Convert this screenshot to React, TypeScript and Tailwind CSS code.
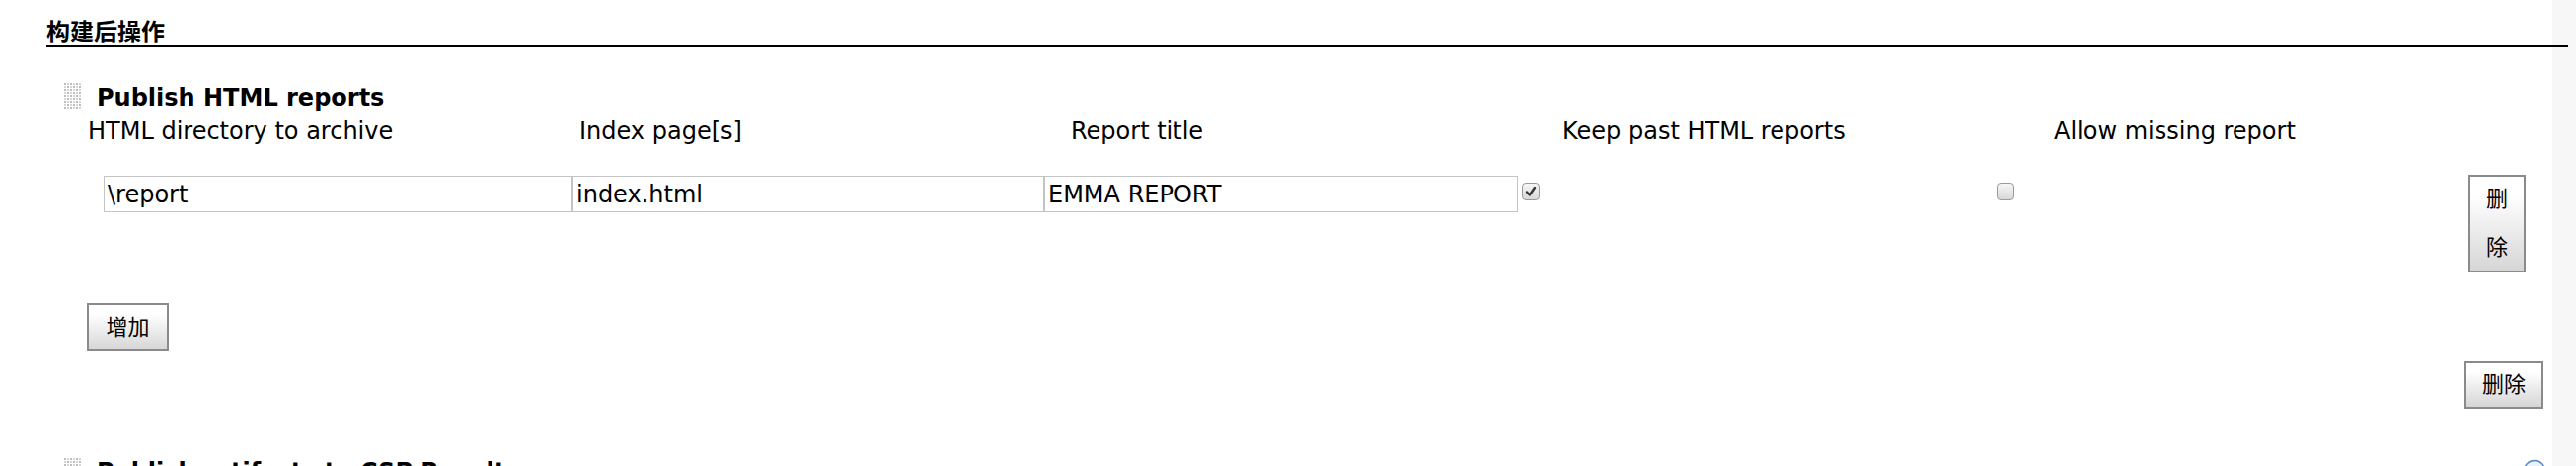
import React from "react";

const columns = [
  "HTML directory to archive",
  "Index page[s]",
  "Report title",
  "Keep past HTML reports",
  "Allow missing report",
];

const btn =
  "border-2 border-[#8a8a8a] bg-linear-to-b from-white from-20% to-[#d6d6d6] text-[22px] leading-none text-black";

function Grip() {
  const dots = [];
  for (let r = 0; r < 9; r++) {
    for (let c = 0; c < 6; c++) {
      dots.push(
        <rect key={`${r}-${c}`} x={c * 3} y={r * 3} width="2" height="2" fill={(r + c) % 2 ? "#d6d6d6" : "#bdbdbd"} />
      );
    }
  }
  return (
    <svg width="18" height="27" viewBox="0 0 18 27" className="shrink-0">
      {dots}
    </svg>
  );
}

function Checkbox({ checked }: { checked?: boolean }) {
  return (
    <div className="w-[18px] h-[18px] rounded-[4px] border border-[#9a9a9a] bg-linear-to-b from-[#f6f6f6] to-[#d8d8d8] flex items-center justify-center">
      {checked && (
        <svg width="12" height="12" viewBox="0 0 12 12">
          <path d="M2 6.5 L4.8 9.5 L10 2" fill="none" stroke="#333" strokeWidth="2.4" strokeLinecap="round" strokeLinejoin="round" />
        </svg>
      )}
    </div>
  );
}

function TextBox({ value, width }: { value: string; width: string }) {
  return (
    <div className={`${width} h-[37px] border border-[#c4c4c4] px-[3px] flex items-center text-[24px] leading-none`}>
      {value}
    </div>
  );
}

export default function App() {
  return (
    <div className="w-full h-[472px] overflow-hidden bg-[linear-gradient(to_right,white_2586px,#f7f7f7_2586px)] text-black font-['DejaVu_Sans','Noto_Sans_CJK_SC',sans-serif]">
      {/* section header */}
      <div className="ml-[47px] mr-[8px] pt-[16px] border-b-2 border-black">
        <div className="text-[24px] leading-[30px] font-bold font-['Noto_Sans_CJK_SC',sans-serif]">构建后操作</div>
      </div>

      {/* Publish HTML reports */}
      <div className="mt-[37px] ml-[65px] flex items-start gap-[15px]">
        <div className="-mt-[1px]">
          <Grip />
        </div>
        <div className="text-[24px] leading-[28px] font-bold">Publish HTML reports</div>
      </div>

      <div className="mt-[6px] ml-[89px] flex text-[24px] leading-[28px]">
        {columns.map((c) => (
          <div key={c} className="w-[498px] shrink-0 whitespace-nowrap">
            {c}
          </div>
        ))}
      </div>

      <div className="mt-[30px] ml-[105px] flex items-start">
        <div className="mt-[1px] flex">
          <TextBox value="\report" width="w-[475px]" />
          <TextBox value="index.html" width="w-[478px]" />
          <TextBox value="EMMA REPORT" width="w-[480px]" />
        </div>
        <div className="w-[485px] pl-[4px] pt-[8px] shrink-0">
          <Checkbox checked />
        </div>
        <div className="w-[478px] pt-[8px] shrink-0">
          <Checkbox />
        </div>
        <button className={`${btn} w-[58px] h-[99px] flex flex-col items-center justify-center gap-[27px]`}>
          <span>删</span>
          <span>除</span>
        </button>
      </div>

      <div className="mt-[31px] ml-[88px]">
        <button className={`${btn} w-[83px] h-[49px]`}>增加</button>
      </div>

      <div className="mt-[10px] ml-[2497px]">
        <button className={`${btn} w-[80px] h-[48px]`}>删除</button>
      </div>

      {/* next publisher, cut off by the viewport */}
      <div className="mt-[50px] ml-[65px] mr-[30px] flex items-start">
        <Grip />
        <div className="ml-[15px] flex-1 text-[24px] leading-[28px] font-bold">Publish artifacts to CSP Results</div>
        <svg width="24" height="24" viewBox="0 0 24 24" className="mt-[1px]">
          <circle cx="12" cy="12" r="10.5" fill="#eaf2fb" stroke="#5a86c4" strokeWidth="1.5" />
          <text x="12" y="17" textAnchor="middle" fontSize="14" fontWeight="bold" fill="#3b6cb4">?</text>
        </svg>
      </div>
    </div>
  );
}
